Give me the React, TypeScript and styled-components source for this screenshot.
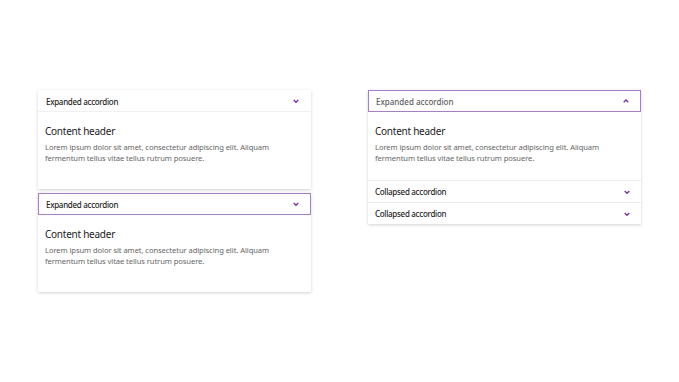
import React from "react";
import styled, { createGlobalStyle } from "styled-components";

const Global = createGlobalStyle`
  html, body { margin: 0; padding: 0; background: #ffffff; }
  body { font-family: "Noto Sans", "Open Sans", sans-serif; }
`;

const Page = styled.div`
  width: 679px;
  height: 382px;
  display: flex;
  align-items: flex-start;
  padding: 90px 0 0 38px;
  box-sizing: border-box;
  gap: 57px;
`;

const Column = styled.div`
  display: flex;
  flex-direction: column;
  gap: 4px;
  width: 273px;
`;

const Card = styled.div`
  background: #fff;
  box-shadow: 0 1px 3px rgba(0, 0, 0, 0.18);
  display: flex;
  flex-direction: column;
`;

const Header = styled.div<{ $active?: boolean; $muted?: boolean; $divider?: boolean }>`
  height: 22px;
  box-sizing: border-box;
  display: flex;
  align-items: center;
  justify-content: space-between;
  padding: 0 7px 0 7px;
  border: 1px solid ${(p) => (p.$active ? "#a77fc4" : "transparent")};
  border-bottom-color: ${(p) => (p.$active ? "#a77fc4" : p.$divider ? "#f0f0f0" : "transparent")};
  font-size: 8px;
  font-weight: 500;
  color: ${(p) => (p.$muted ? "#5e5e5e" : "#1f1f1f")};
  letter-spacing: ${(p) => (p.$muted ? "0" : "-0.3px")};
`;

const Body = styled.div<{ $pad: number }>`
  padding: 12px 7px ${(p) => p.$pad}px 7px;
`;

const Title = styled.div`
  font-size: 10px;
  color: #222;
  line-height: 14px;
  margin-bottom: 4px;
  letter-spacing: -0.25px;
`;

const Text = styled.div`
  font-size: 7.6px;
  line-height: 11px;
  color: #666;
  letter-spacing: -0.08px;
`;

const Row = styled.div`
  height: 22px;
  box-sizing: border-box;
  display: flex;
  align-items: center;
  justify-content: space-between;
  padding: 0 7px;
  border-top: 1px solid #ececec;
  font-size: 8px;
  font-weight: 500;
  color: #1f1f1f;
  letter-spacing: -0.3px;
`;

const Chevron = ({ up }: { up?: boolean }) => (
  <svg width="8" height="6" viewBox="0 0 8 6" style={{ marginRight: 3 }}>
    <path
      d={up ? "M1.7 4.3 L4 2 L6.3 4.3" : "M1.7 2 L4 4.3 L6.3 2"}
      fill="none"
      stroke="#7a2ea3"
      strokeWidth="1.3"
    />
  </svg>
);

const lorem = (
  <Text>
    Lorem ipsum dolor sit amet, consectetur adipiscing elit. Aliquam
    <br />
    fermentum tellus vitae tellus rutrum posuere.
  </Text>
);

export default function App() {
  return (
    <>
      <Global />
      <Page>
        <Column>
          <Card>
            <Header $divider>
              <span>Expanded accordion</span>
              <Chevron />
            </Header>
            <Body $pad={25}>
              <Title>Content header</Title>
              {lorem}
            </Body>
          </Card>
          <Card>
            <Header $active>
              <span>Expanded accordion</span>
              <Chevron />
            </Header>
            <Body $pad={25}>
              <Title>Content header</Title>
              {lorem}
            </Body>
          </Card>
        </Column>
        <Column>
          <Card>
            <Header $active $muted>
              <span>Expanded accordion</span>
              <Chevron up />
            </Header>
            <Body $pad={16}>
              <Title>Content header</Title>
              {lorem}
            </Body>
            <Row>
              <span>Collapsed accordion</span>
              <Chevron />
            </Row>
            <Row>
              <span>Collapsed accordion</span>
              <Chevron />
            </Row>
          </Card>
        </Column>
      </Page>
    </>
  );
}
